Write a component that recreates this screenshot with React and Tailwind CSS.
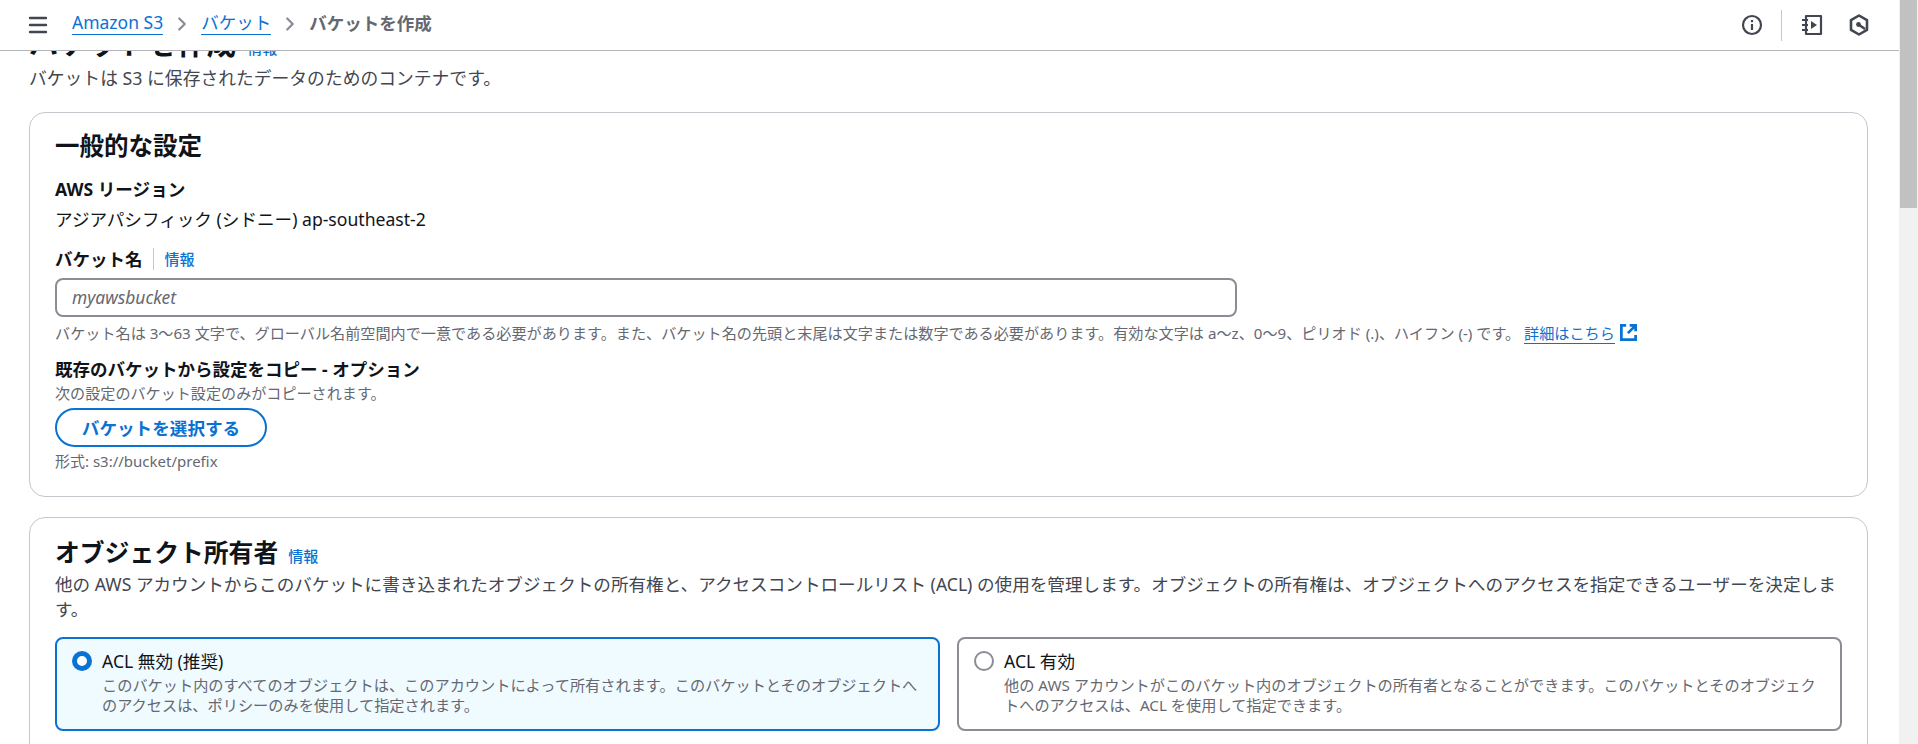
import { Menu, ChevronRight } from "lucide-react";

const FONT = "font-['Noto_Sans','Noto_Sans_CJK_JP',sans-serif]";

function InfoLink({ className = "" }) {
  return <a className={`text-[#0972d3] text-[15px] font-medium ${className}`}>情報</a>;
}

function ExternalIcon() {
  return (
    <svg width="19" height="19" viewBox="0 0 16 16" fill="none" stroke="#0972d3" strokeWidth="2.3" className="inline-block ml-[4px] align-[-3px]">
      <path d="M6 2H2v12h12v-4" />
      <path d="M9 2h5v5M14 2 7.5 8.5" />
    </svg>
  );
}

function TopBar() {
  return (
    <header className="h-[51px] shrink-0 border-b border-[#b4b4bb] bg-white flex items-center pl-[26px] pr-[29px]">
      <Menu size={24} strokeWidth={2.4} className="text-[#424650]" />
      <nav className="flex items-center ml-[22px] text-[17.5px] -mt-[5px]">
        <a className="text-[#0972d3] border-b border-[#0972d3] leading-[24px]">Amazon S3</a>
        <ChevronRight size={22} strokeWidth={2.5} className="text-[#8c8c94] mx-[8px] mt-[3px]" />
        <a className="text-[#0972d3] border-b border-[#0972d3] leading-[24px]">バケット</a>
        <ChevronRight size={22} strokeWidth={2.5} className="text-[#8c8c94] mx-[8px] mt-[3px]" />
        <span className="text-[#656871] font-bold leading-[24px]">バケットを作成</span>
      </nav>
      <div className="ml-auto flex items-center text-[#424650]">
        <svg width="22" height="22" viewBox="0 0 22 22" fill="none" stroke="currentColor" strokeWidth="2.2">
          <circle cx="11" cy="11" r="9" />
          <path d="M11 10v6M11 6v2.2" />
        </svg>
        <div className="w-px h-[31px] bg-[#c6c6cd] ml-[18px] mr-[19px]" />
        <svg width="22" height="22" viewBox="0 0 22 22" fill="none" stroke="currentColor" strokeWidth="2.2">
          <path d="M5 2h15v18H5z" strokeLinejoin="round" />
          <path d="M1 6h6M1 11h6M1 16h6" />
          <path d="M10 7l6 4-6 4z" fill="currentColor" stroke="none" />
        </svg>
        <svg width="22" height="22" viewBox="0 0 22 22" fill="none" stroke="currentColor" strokeWidth="2.6" className="ml-[25px]">
          <path d="M11 1.5 19 6.2v9.6L11 20.5 3 15.8V6.2z" strokeLinejoin="round" />
          <circle cx="10.5" cy="10.5" r="2.4" fill="currentColor" stroke="none" />
          <path d="M10.5 10.5 17 15" />
        </svg>
      </div>
    </header>
  );
}

function GeneralCard() {
  return (
    <section className="border border-[#c6c6cd] rounded-[16px] bg-white h-[385px] px-[25px] pt-[18px]">
      <h2 className="text-[24.5px] font-bold leading-[30px] text-[#0f141a]">一般的な設定</h2>
      <h3 className="mt-[17px] text-[17.6px] font-bold leading-[22px] text-[#0f141a]">AWS リージョン</h3>
      <p className="mt-[9px] text-[17.6px] leading-[20px] text-[#0f141a]">アジアパシフィック (シドニー) ap-southeast-2</p>
      <div className="mt-[19px] flex items-center h-[22px]">
        <span className="text-[17.5px] font-bold text-[#0f141a]">バケット名</span>
        <span className="w-px h-[22px] bg-[#c6c6cd] ml-[10px] mr-[11px]" />
        <InfoLink />
      </div>
      <div className="mt-[8px] w-[1182px] h-[39px] border-2 border-[#8c8c94] rounded-[8px] flex items-center pl-[15px]">
        <span className="italic text-[17.4px] text-[#656871]">myawsbucket</span>
      </div>
      <p className="mt-[6px] text-[15.13px] leading-[18px] text-[#656871] whitespace-nowrap">
        バケット名は 3～63 文字で、グローバル名前空間内で一意である必要があります。また、バケット名の先頭と末尾は文字または数字である必要があります。有効な文字は a～z、0～9、ピリオド (.)、ハイフン (-) です。 <a className="text-[#0972d3] border-b border-[#0972d3]">詳細はこちら</a><ExternalIcon />
      </p>
      <h3 className="mt-[16px] text-[17.5px] font-bold leading-[22px] text-[#0f141a]">既存のバケットから設定をコピー - オプション</h3>
      <p className="mt-[4px] text-[15.1px] leading-[18px] text-[#656871]">次の設定のバケット設定のみがコピーされます。</p>
      <button className="mt-[6px] w-[212px] h-[39px] rounded-full border-2 border-[#0972d3] text-[#0972d3] text-[17.6px] font-bold leading-[22px]">バケットを選択する</button>
      <p className="mt-[5px] text-[15px] leading-[18px] text-[#656871]">形式: s3://bucket/prefix</p>
    </section>
  );
}

function RadioCard({ selected, label, children }) {
  return (
    <div className={`flex-1 h-[94px] rounded-[8px] border-2 flex pl-[15px] pt-[11px] ${selected ? "border-[#0972d3] bg-[#f0fbff]" : "border-[#8c8c94] bg-white"}`}>
      {selected ? (
        <span className="w-[20px] h-[20px] rounded-full border-[5px] border-[#0972d3] bg-white shrink-0 mt-[1px]" />
      ) : (
        <span className="w-[20px] h-[20px] rounded-full border-2 border-[#8c8c94] bg-white shrink-0 mt-[1px]" />
      )}
      <div className="ml-[10px] pr-[15px]">
        <div className="text-[17.6px] leading-[22px] text-[#0f141a]">{label}</div>
        <div className="mt-[3px] text-[15.2px] leading-[20px] text-[#656871]">{children}</div>
      </div>
    </div>
  );
}

function OwnershipCard() {
  return (
    <section className="border border-[#c6c6cd] rounded-[16px] bg-white mt-[20px] h-[300px] px-[25px] pt-[17px]">
      <div className="flex items-baseline">
        <h2 className="text-[24.8px] font-bold leading-[34px] text-[#0f141a]">オブジェクト所有者</h2>
        <InfoLink className="ml-[10px]" />
      </div>
      <p className="mt-[3px] text-[17.6px] leading-[25px] text-[#424650]">
        他の AWS アカウントからこのバケットに書き込まれたオブジェクトの所有権と、アクセスコントロールリスト (ACL) の使用を管理します。オブジェクトの所有権は、オブジェクトへのアクセスを指定できるユーザーを決定します。
      </p>
      <div className="mt-[15px] flex gap-[17px]">
        <RadioCard selected label="ACL 無効 (推奨)">
          このバケット内のすべてのオブジェクトは、このアカウントによって所有されます。このバケットとそのオブジェクトへのアクセスは、ポリシーのみを使用して指定されます。
        </RadioCard>
        <RadioCard label="ACL 有効">
          他の AWS アカウントがこのバケット内のオブジェクトの所有者となることができます。このバケットとそのオブジェクトへのアクセスは、ACL を使用して指定できます。
        </RadioCard>
      </div>
    </section>
  );
}

export default function App() {
  return (
    <div className={`h-screen flex overflow-hidden bg-white ${FONT}`}>
      <div className="flex-1 min-w-0 flex flex-col">
        <TopBar />
        <main className="flex-1 overflow-hidden pl-[29px] pr-[31px]">
          <div className="flex items-baseline -mt-[26px] h-[36px]">
            <h1 className="text-[29.6px] font-bold leading-[36px] text-[#0f141a]">バケットを作成</h1>
            <InfoLink className="ml-[11px]" />
          </div>
          <p className="mt-[5px] text-[17.8px] leading-[24px] text-[#424650]">バケットは S3 に保存されたデータのためのコンテナです。</p>
          <div className="mt-[22px]">
            <GeneralCard />
            <OwnershipCard />
          </div>
        </main>
      </div>
      <div className="w-[19px] shrink-0 bg-[#f1f1f1] px-[1px]">
        <div className="h-[208px] bg-[#c1c1c1]" />
      </div>
    </div>
  );
}
